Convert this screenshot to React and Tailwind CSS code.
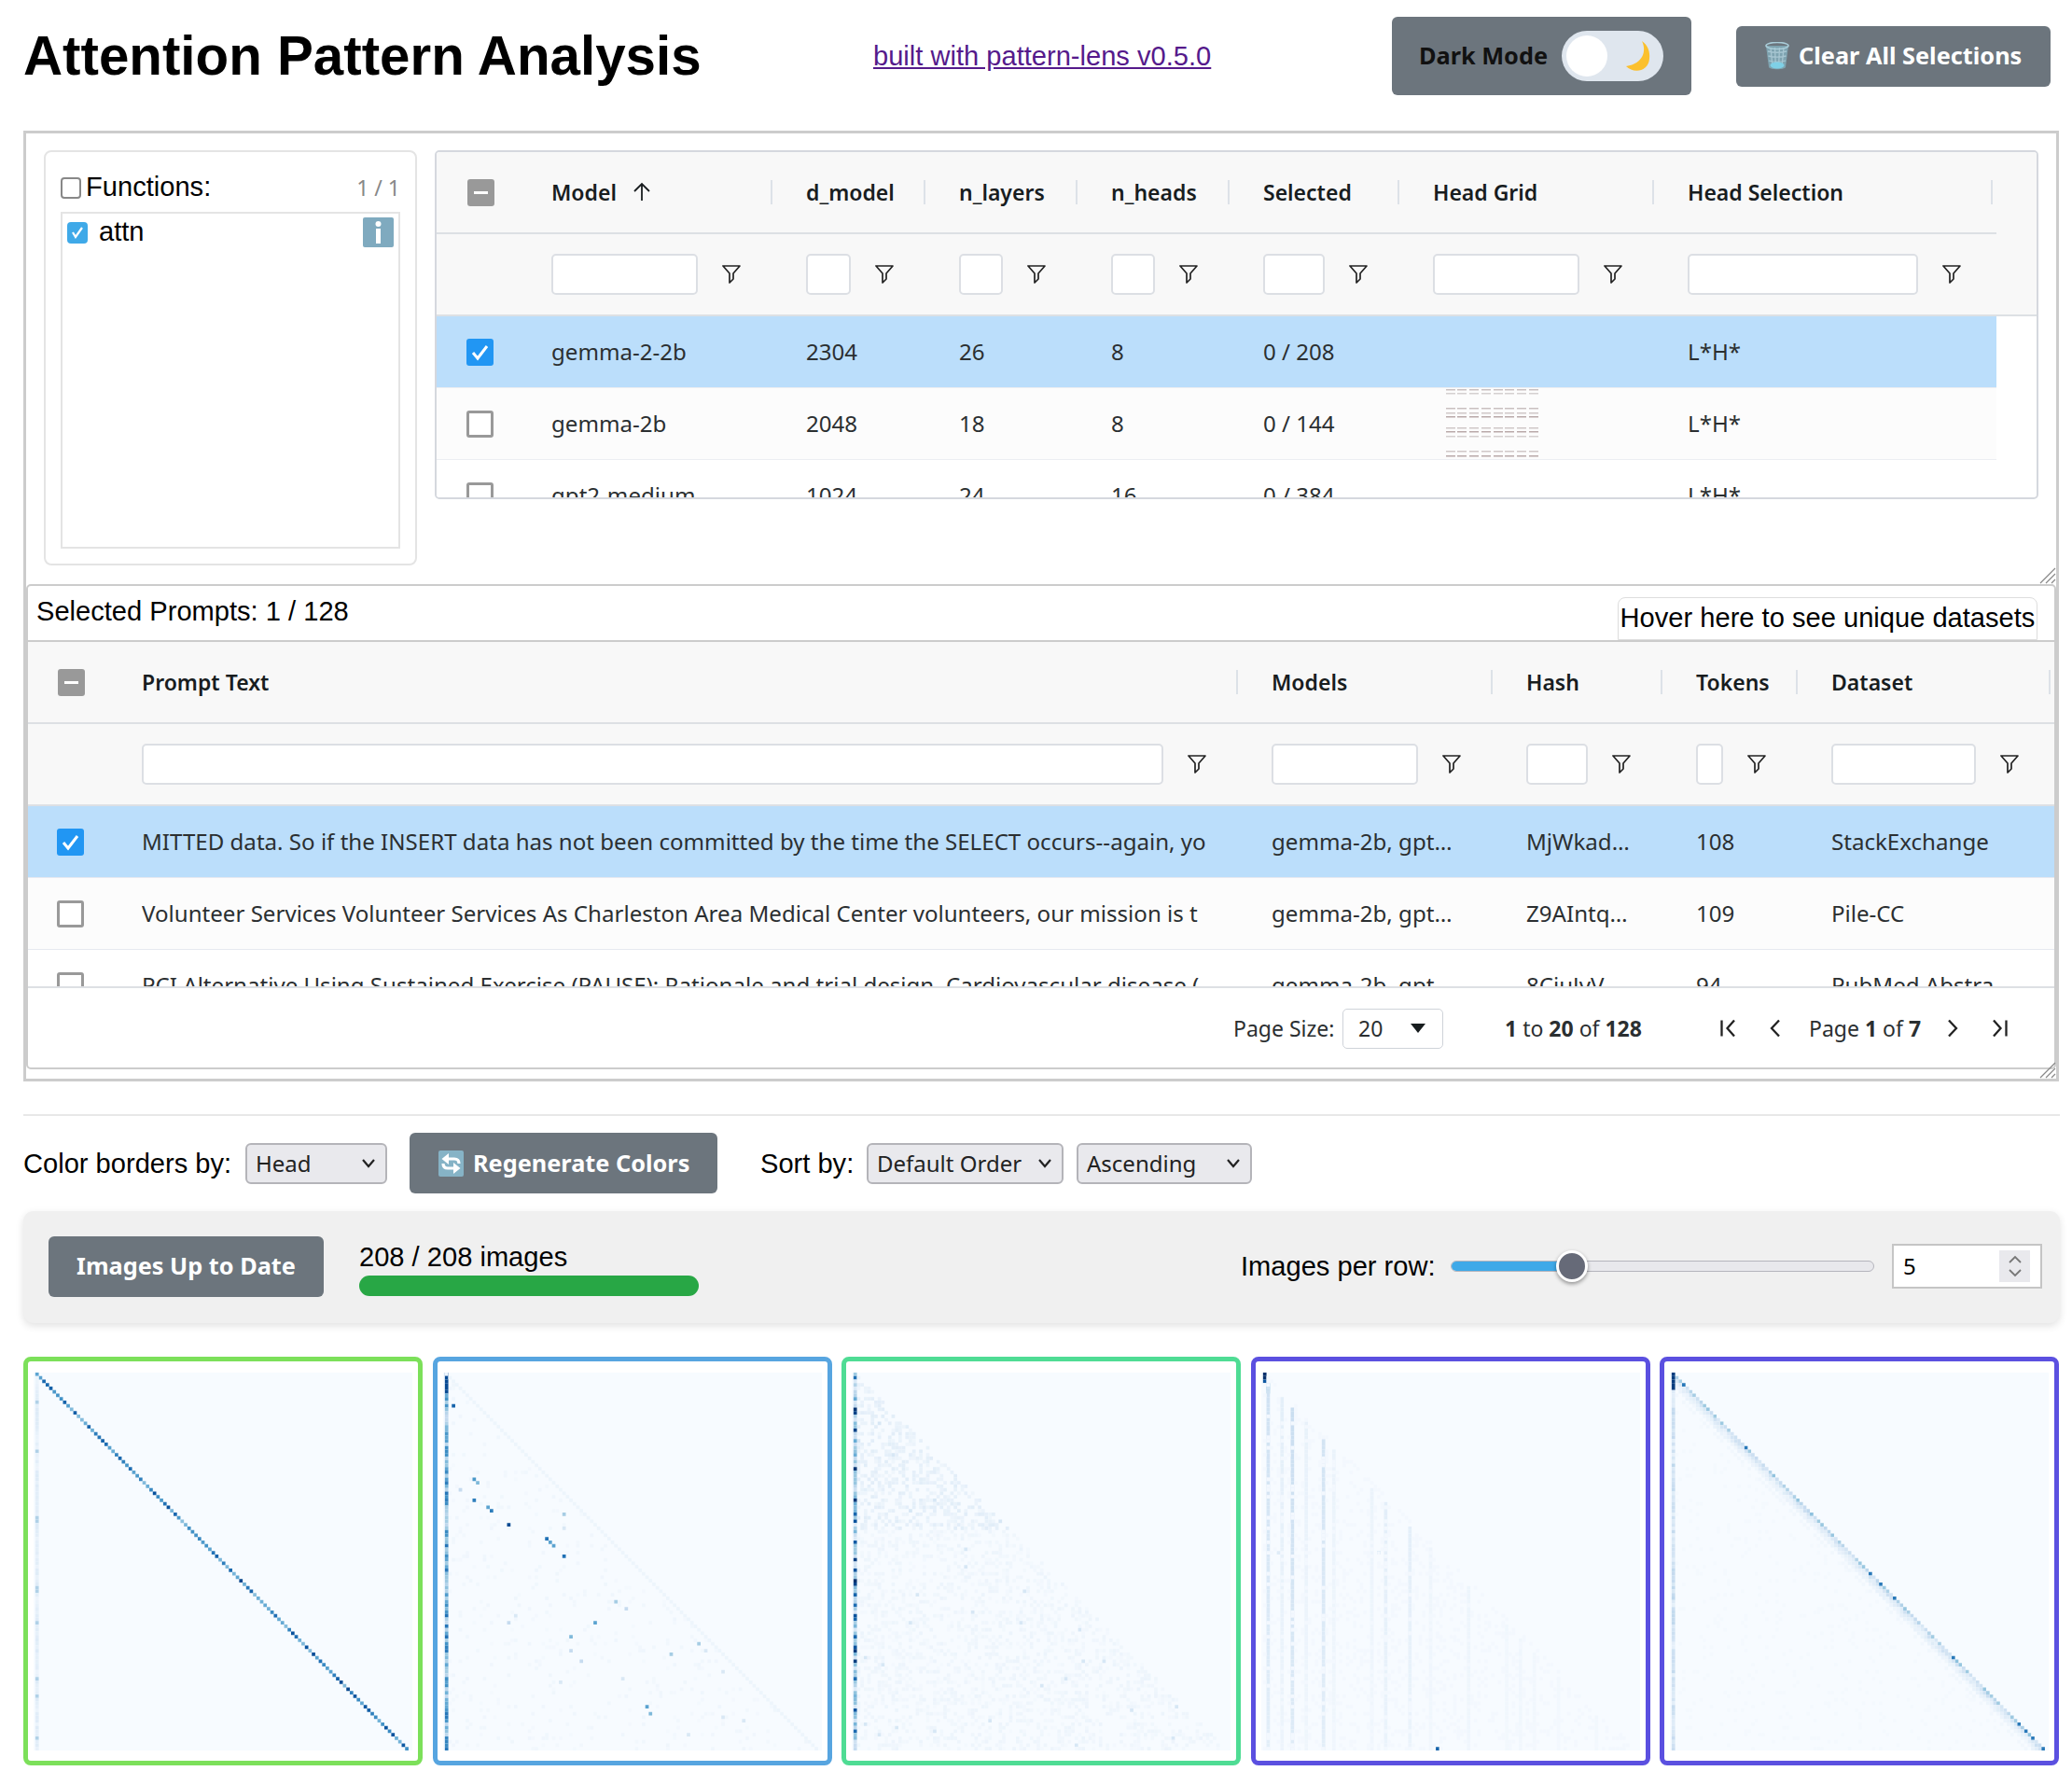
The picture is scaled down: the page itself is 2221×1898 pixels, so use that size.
import React from 'react';

const uiFont = "font-['Noto_Sans',sans-serif]";

const modelCols = 'grid-cols-[87px_273px_164px_163px_163px_182px_273px_363px]';
const promptCols = 'grid-cols-[86px_1211px_273px_182px_145px_271px]';

const modelHeaders = ['Model', 'd_model', 'n_layers', 'n_heads', 'Selected', 'Head Grid', 'Head Selection'];
const promptHeaders = ['Prompt Text', 'Models', 'Hash', 'Tokens', 'Dataset'];

const models = [
  ['gemma-2-2b', '2304', '26', '8', '0 / 208', '', 'L*H*'],
  ['gemma-2b', '2048', '18', '8', '0 / 144', 'grid', 'L*H*'],
  ['gpt2-medium', '1024', '24', '16', '0 / 384', '', 'L*H*'],
];

const prompts = [
  ['MITTED data. So if the INSERT data has not been committed by the time the SELECT occurs--again, yo', 'gemma-2b, gpt…', 'MjWkad…', '108', 'StackExchange'],
  ['Volunteer Services Volunteer Services As Charleston Area Medical Center volunteers, our mission is t', 'gemma-2b, gpt…', 'Z9AIntq…', '109', 'Pile-CC'],
  ['PCI Alternative Using Sustained Exercise (PAUSE): Rationale and trial design. Cardiovascular disease (', 'gemma-2b, gpt…', '8CjuJvV…', '94', 'PubMed Abstra…'],
];

// matplotlib Blues
const BLUES = [[247, 251, 255], [222, 235, 247], [198, 219, 239], [158, 202, 225], [107, 174, 214], [66, 146, 198], [33, 113, 181], [8, 81, 156], [8, 48, 107]];
const blue = (t) => {
  const p = Math.min(7.999, Math.max(0, t * 8));
  const k = Math.floor(p);
  const f = p - k;
  const c = BLUES[k].map((v, i) => Math.round(v + (BLUES[k + 1][i] - v) * f));
  return `rgb(${c[0]},${c[1]},${c[2]})`;
};

const makeRng = (seed) => () => {
  seed = (seed * 1664525 + 1013904223) % 4294967296;
  return seed / 4294967296;
};

const N = 108;

function heatOne() {
  const r = makeRng(11);
  const cells = [];
  for (let i = 0; i < N; i++) {
    cells.push([i, i, 0.42 + r() * 0.5]);
    if (i > 0) cells.push([0, i, r() < 0.1 ? 0.32 : 0.05 + r() * 0.08]);
  }
  return cells;
}

const spotsTwo = [
  [8, 30, 0.6], [9, 31, 0.45], [2, 9, 0.8], [4, 33, 0.25], [8, 36, 0.7], [12, 38, 0.55], [13, 39, 0.7], [18, 43, 0.9],
  [29, 47, 0.75], [30, 48, 0.55], [31, 49, 0.55], [34, 52, 0.75], [34, 40, 0.35], [34, 44, 0.15], [43, 71, 0.55], [18, 71, 0.25],
  [20, 69, 0.15], [36, 75, 0.45], [36, 79, 0.25], [39, 82, 0.25], [65, 80, 0.35], [73, 77, 0.35], [80, 85, 0.15], [58, 95, 0.55],
  [59, 97, 0.45], [52, 67, 0.25], [49, 65, 0.35], [75, 79, 0.15], [51, 87, 0.15], [33, 88, 0.15], [80, 98, 0.15], [86, 99, 0.15], [70, 103, 0.15],
];

function heatTwo() {
  const r = makeRng(23);
  const cells = [];
  for (let i = 0; i < N; i++) {
    cells.push([0, i, i < 6 ? 0.9 : 0.25 + r() * 0.5]);
    cells.push([i, i, 0.05]);
    for (let j = i + 1; j < N; j++) {
      if (r() < 0.07) cells.push([i, j, 0.015 + r() * 0.025]);
    }
  }
  return cells.concat(spotsTwo);
}

function heatThree() {
  const r = makeRng(37);
  const cells = [];
  for (let i = 0; i < N; i++) {
    cells.push([0, i, r() < 0.22 ? 0.75 + r() * 0.25 : 0.12 + r() * 0.4]);
    for (let j = i; j < N; j++) {
      if (i === 0) continue;
      const p = j < 45 ? 0.45 : 0.35;
      if (r() < p) cells.push([i, j, r() < 0.012 ? 0.16 : j < 45 ? 0.04 + r() * 0.07 : 0.015 + r() * 0.04]);
    }
  }
  return cells;
}

function heatFour() {
  const r = makeRng(41);
  const cells = [[0, 0, 1], [0, 1, 1], [0, 2, 0.85], [1, 3, 0.45], [1, 4, 0.45], [1, 5, 0.35], [33, 51, 0.35], [50, 107, 0.8], [4, 51, 0.12]];
  const streaks = [[1, 0.2], [5, 0.1], [8, 0.24], [12, 0.08], [17, 0.2], [20, 0.07], [31, 0.07], [35, 0.12], [42, 0.12], [48, 0.06], [59, 0.07], [70, 0.05], [74, 0.06], [78, 0.05], [85, 0.04], [96, 0.05]];
  streaks.forEach(([col, s]) => {
    for (let j = col + 2; j < N; j++) cells.push([col, j, s * (1 - j / 220)]);
  });
  for (let i = 0; i < N; i++) {
    for (let j = i; j < N; j++) {
      if (r() < 0.2) cells.push([i, j, 0.02]);
    }
  }
  return cells;
}

function heatFive() {
  const r = makeRng(53);
  const cells = [];
  for (let i = 0; i < N; i++) {
    const hit = r();
    cells.push([i, i, hit < 0.08 ? 0.72 : 0.14 + r() * 0.28]);
    if (i > 1) cells.push([i - 1, i, 0.08 + r() * 0.14]);
    if (i > 2) cells.push([i - 2, i, 0.05 + r() * 0.07]);
    if (i > 3) cells.push([i - 3, i, 0.03 + r() * 0.04]);
    if (i > 5 && r() < 0.6) cells.push([i - 5, i, 0.03]);
    cells.push([0, i, i < 5 ? 0.95 : 0.08 + r() * 0.2]);
    for (let j = i + 3; j < N; j++) {
      if (i > 0 && r() < 0.08) cells.push([i, j, 0.015]);
    }
  }
  return cells;
}

const heatmaps = [
  { color: 'border-[#7ce05a]', cells: heatOne() },
  { color: 'border-[#57a5e0]', cells: heatTwo() },
  { color: 'border-[#4fdc94]', cells: heatThree() },
  { color: 'border-[#5b50e0]', cells: heatFour() },
  { color: 'border-[#5b50e0]', cells: heatFive() },
];

const Heatmap = ({ color, cells }) => (
  <div className={`border-[5px] rounded-lg px-[6px] pt-[12px] pb-[11px] bg-white ${color}`}>
    <svg viewBox="-0.5 0 109.6 108" preserveAspectRatio="none" className="block w-full h-[405px]">
      <rect x="-0.5" width="109.6" height={N} fill="#f7fbff" />
      {cells.map(([x, y, t], i) => (
        <rect key={i} x={x} y={y} width="1" height="1" fill={blue(t)} />
      ))}
    </svg>
  </div>
);

const Check = ({ state }) => {
  if (state === 'on') {
    return (
      <div className="w-[29px] h-[29px] rounded-[3px] bg-[#2196f3] flex items-center justify-center">
        <svg width="21" height="21" viewBox="0 0 21 21" fill="none" stroke="white" strokeWidth="3"><path d="M3 11l5 6L18 4" /></svg>
      </div>
    );
  }
  if (state === 'mixed') {
    return (
      <div className="w-[29px] h-[29px] rounded-[3px] bg-[#999] flex items-center justify-center">
        <div className="w-[15px] h-[3px] bg-white" />
      </div>
    );
  }
  return <div className="w-[29px] h-[29px] rounded-[3px] border-[3px] border-[#999] bg-white" />;
};

const Funnel = () => (
  <svg width="20" height="20" viewBox="0 0 20 20" fill="none" stroke="#222" strokeWidth="1.7" className="shrink-0">
    <path d="M1 1h18l-7 8v6l-4 4V9z" strokeLinejoin="round" />
  </svg>
);

const ResizeHandle = () => (
  <svg width="18" height="18" viewBox="0 0 18 18" stroke="#888" strokeWidth="1.2" className="absolute right-0 bottom-0">
    <path d="M17 1L1 17M17 7L7 17M17 13L13 17" />
  </svg>
);

const HeadGrid = () => {
  const xs = [0, 12, 25, 38, 51, 63, 76, 89];
  const ys = [[1, '#c9c0c0'], [5, '#d5d0d0'], [21, '#c9c0c0'], [26, '#cfc8c8'], [30, '#b9a9a9'], [42, '#d0c8c8'], [46, '#b9a9a9'], [51, '#d5d0d0'], [67, '#d0c8c8'], [72, '#b9a9a9']];
  return (
    <svg width="100" height="76" viewBox="0 0 100 76" className="ml-[14px]">
      {ys.map(([y, c]) => xs.map((x) => <rect key={`${x}-${y}`} x={x} y={y} width="10" height="1.5" fill={c} />))}
    </svg>
  );
};

const HeaderCell = ({ label, sorted }) => (
  <div className="relative flex items-center pl-[36px] h-full">
    <span className="font-semibold text-[23px] text-[#181d1f] whitespace-nowrap">{label}</span>
    {sorted && (
      <svg width="22" height="22" viewBox="0 0 22 22" fill="none" stroke="#181d1f" strokeWidth="1.8" className="ml-[16px]">
        <path d="M11 20V2M3 10l8-8 8 8" />
      </svg>
    )}
    <div className="absolute right-0 top-1/2 -translate-y-1/2 w-[2px] h-[26px] bg-[#dde2e8]" />
  </div>
);

const FilterCell = () => (
  <div className="flex items-center gap-[26px] pl-[36px] pr-[34px] h-full">
    <div className="flex-1 min-w-0 h-[44px] bg-white border-2 border-[#dcdfe4] rounded-[5px]" />
    <Funnel />
  </div>
);

const Cell = ({ children }) => (
  <div className="flex items-center pl-[36px] pr-[29px] h-full text-[24.1px] text-[#2b2f31] whitespace-nowrap overflow-hidden">
    <span className="block overflow-hidden">{children}</span>
  </div>
);

const ModelGrid = () => (
  <div className={`w-[1719px] h-[374px] border-2 border-[#d5d8de] rounded-[5px] overflow-hidden bg-white ${uiFont}`}>
    <div className="bg-[#f8f8f8] border-b-2 border-[#dde0e4]">
      <div className={`grid ${modelCols} w-[1672px] h-[88px] border-b-2 border-[#dde0e4]`}>
        <div className="flex items-center pl-[33px]"><Check state="mixed" /></div>
        {modelHeaders.map((h, i) => <HeaderCell key={h} label={h} sorted={i === 0} />)}
      </div>
      <div className={`grid ${modelCols} w-[1672px] h-[86px]`}>
        <div />
        {modelHeaders.map((h) => <FilterCell key={h} />)}
      </div>
    </div>
    {models.map((row, i) => (
      <div key={row[0]} className={`grid ${modelCols} w-[1672px] h-[77px] border-b border-[#eceef2] ${i === 0 ? 'bg-[#bbdefb]' : i === 1 ? 'bg-[#fcfcfc]' : 'bg-white'}`}>
        <div className="flex items-center pl-[32px]"><Check state={i === 0 ? 'on' : 'off'} /></div>
        {row.map((c, k) => (c === 'grid' ? <div key={k} className="flex items-center pl-[36px]"><HeadGrid /></div> : <Cell key={k}>{c}</Cell>))}
      </div>
    ))}
  </div>
);

const PromptGrid = () => (
  <div className={uiFont}>
    <div className="bg-[#f8f8f8] border-b-2 border-[#dde0e4]">
      <div className={`grid ${promptCols} h-[88px] border-b-2 border-[#dde0e4]`}>
        <div className="flex items-center pl-[32px]"><Check state="mixed" /></div>
        {promptHeaders.map((h) => <HeaderCell key={h} label={h} />)}
      </div>
      <div className={`grid ${promptCols} h-[86px]`}>
        <div />
        {promptHeaders.map((h) => <FilterCell key={h} />)}
      </div>
    </div>
    <div className="h-[195px] overflow-hidden bg-white border-b-2 border-[#dde0e4]">
      {prompts.map((row, i) => (
        <div key={row[2]} className={`grid ${promptCols} h-[77px] border-b border-[#e6e9f0] ${i === 0 ? 'bg-[#bbdefb]' : i === 1 ? 'bg-[#fcfcfc]' : 'bg-white'}`}>
          <div className="flex items-center pl-[31px]"><Check state={i === 0 ? 'on' : 'off'} /></div>
          {row.map((c, k) => <Cell key={k}>{c}</Cell>)}
        </div>
      ))}
    </div>
    <Pagination />
  </div>
);

const PagerIcon = ({ d }) => (
  <svg width="22" height="22" viewBox="0 0 22 22" fill="none" stroke="#222" strokeWidth="2.3"><path d={d} /></svg>
);

const Pagination = () => (
  <div className="h-[86px] flex items-center text-[23px] text-[#2b2f31] pl-[1292px]">
    <span className="w-[117px] whitespace-nowrap">Page Size:</span>
    <div className="w-[108px] h-[43px] border border-[#cfd3d9] rounded-[5px] flex items-center justify-between pl-[16px] pr-[18px]">
      <span>20</span>
      <svg width="16" height="10" viewBox="0 0 16 10" fill="#181d1f"><path d="M0 0h16L8 10z" /></svg>
    </div>
    <span className="w-[147px] ml-[66px] whitespace-nowrap"><b>1</b> to <b>20</b> of <b>128</b></span>
    <div className="ml-[80px] w-[22px]"><PagerIcon d="M5.5 2.5v17M19 2.5L11.5 11l7.5 8.5" /></div>
    <div className="ml-[30px] w-[22px]"><PagerIcon d="M15 2.5L7 11l8 8.5" /></div>
    <span className="ml-[25px] w-[120px] whitespace-nowrap">Page <b>1</b> of <b>7</b></span>
    <div className="ml-[23px] w-[22px]"><PagerIcon d="M7 2.5l8 8.5-8 8.5" /></div>
    <div className="ml-[30px] w-[22px]"><PagerIcon d="M16.5 2.5v17M3 2.5L10.5 11 3 19.5" /></div>
  </div>
);

const Select = ({ label, className }) => (
  <div className={`h-[44px] bg-[#e9e9ed] border-2 border-[#b4b4b9] rounded-[6px] flex items-center justify-between pl-[9px] pr-[10px] text-[24px] text-[#222] ${uiFont} ${className}`}>
    <span>{label}</span>
    <svg width="16" height="10" viewBox="0 0 16 10" fill="none" stroke="#222" strokeWidth="2.2"><path d="M2 1l6 7 6-7" /></svg>
  </div>
);

const TrashEmoji = () => (
  <svg width="26" height="30" viewBox="0 0 26 30" className="shrink-0">
    <path d="M1 4l3 23c1 3 17 3 18 0l3-23z" fill="#7ea3b0" />
    <path d="M6 6l2 21M10.500 6l1 22M15.500 6l-1 22M20 6l-2 21M3 10c6 1.500 14 1.500 20 0M3.500 15c6 1.500 13 1.500 19 0M4 20c5 1.500 13 1.500 18 0" stroke="#a7c6d1" strokeWidth="1.3" fill="none" />
    <ellipse cx="13" cy="4" rx="12" ry="3.500" fill="none" stroke="#a9ccd8" strokeWidth="1.600" />
    <ellipse cx="13" cy="25" rx="7.500" ry="3.500" fill="#7fd0e6" />
  </svg>
);

const RefreshEmoji = () => (
  <svg width="27" height="28" viewBox="0 0 27 28" className="shrink-0">
    <rect width="27" height="28" rx="2" fill="#86b3c6" />
    <path d="M22 14c0-3-1.500-5-5-5H10" stroke="white" strokeWidth="3.200" fill="none" />
    <path d="M11 3v12L3.500 9z" fill="white" />
    <path d="M5 14c0 3 1.500 5 5 5h7" stroke="white" strokeWidth="3.200" fill="none" />
    <path d="M16 13v12l7.500-6z" fill="white" />
  </svg>
);

const InfoEmoji = () => (
  <svg width="33" height="32" viewBox="0 0 33 32">
    <rect width="33" height="32" rx="2" fill="#7faabf" />
    <circle cx="16.5" cy="7" r="3" fill="white" />
    <rect x="14" y="12" width="5" height="16" fill="white" />
  </svg>
);

const Moon = () => (
  <svg width="28" height="36" viewBox="0 0 28 36">
    <path d="M19 1c5 10 2 24-17 27 8 8 24 6 25-8C28 12 25 5 19 1z" fill="#fbc02d" />
  </svg>
);

const FunctionPanel = () => (
  <div className="w-[400px] h-[445px] shrink-0 border-2 border-[#e4e4e4] rounded-[8px] px-[16px] pt-[18px] pb-[16px] flex flex-col">
    <div className="flex items-center h-[46px] pb-[6px] text-[29.1px] text-black">
      <div className="w-[22px] h-[23px] bg-white border-2 border-[#888] rounded-[4px] mr-[5px]" />
      <span>Functions:</span>
      <span className={`ml-auto text-[23px] text-[#888] ${uiFont}`}>1 / 1</span>
    </div>
    <div className="flex-1 border-2 border-[#e4e4e4] px-[5px] pt-[3px]">
      <div className="flex items-center text-[29.1px] h-[34px]">
        <div className="w-[22px] h-[23px] rounded-[4px] bg-[#3fa9e8] flex items-center justify-center">
          <svg width="14" height="14" viewBox="0 0 14 14" fill="none" stroke="white" strokeWidth="2.2"><path d="M2 7l3 5 7-10" /></svg>
        </div>
        <span className="ml-[12px]">attn</span>
        <span className="ml-auto"><InfoEmoji /></span>
      </div>
    </div>
  </div>
);

export default function App() {
  return (
    <div className="w-[2221px] h-[1898px] overflow-hidden pl-[25px] pr-[13px] bg-white font-['Liberation_Sans',sans-serif] text-black">
      {/* title row */}
      <div className="flex items-center h-[120px] mb-[20px]">
        <h1 className="w-[911px] shrink-0 text-[58.3px] leading-none font-bold whitespace-nowrap">Attention Pattern Analysis</h1>
        <a href="#" className="w-[556px] shrink-0 pt-[2px] text-[29.1px] text-[#551a8b] underline whitespace-nowrap">built with pattern-lens v0.5.0</a>
        <div className={`w-[321px] h-[84px] shrink-0 bg-[#6c757d] rounded-[6px] flex items-center pl-[29px] ${uiFont}`}>
          <span className="w-[153px] text-[25.3px] font-bold text-[#111] whitespace-nowrap">Dark Mode</span>
          <div className="relative w-[109px] h-[54px] rounded-full bg-[#dfe6ee]">
            <div className="absolute left-[5px] top-[5px] w-[44px] h-[44px] rounded-full bg-white" />
            <div className="absolute right-[14px] top-[10px]"><Moon /></div>
          </div>
        </div>
        <div className={`ml-[48px] w-[337px] h-[65px] shrink-0 bg-[#6c757d] rounded-[6px] flex items-center pl-[31px] gap-[10px] text-[25.3px] font-bold text-white whitespace-nowrap ${uiFont}`}>
          <TrashEmoji />
          Clear All Selections
        </div>
      </div>

      {/* selection box */}
      <div className="relative w-[2182px] h-[1019px] border-[3px] border-[#ccc] flex flex-col">
        <div className="relative h-[483px] flex gap-[19px] pl-[19px] pt-[18px]">
          <FunctionPanel />
          <ModelGrid />
          <ResizeHandle />
        </div>
        <div className="relative h-[520px] border-2 border-[#ccc] rounded-[5px] bg-white">
          <div className="h-[58px] flex items-center justify-between pl-[9px] text-[29.1px]">
            <span className="pb-[2px]">Selected Prompts: 1 / 128</span>
            <div className="self-end w-[450px] h-[46px] border border-[#ddd] rounded-t-[8px] flex items-center justify-center mr-[18px] whitespace-nowrap">Hover here to see unique datasets</div>
          </div>
          <div className="border-t-2 border-[#ccc]"><PromptGrid /></div>
        </div>
        <ResizeHandle />
      </div>

      <div className="mt-[35px] h-[2px] bg-[#e8e8e8]" />

      {/* color and sort controls */}
      <div className="flex items-center h-[65px] mt-[18px] text-[29.1px]">
        <span className="w-[238px] pt-[2px] whitespace-nowrap">Color borders by:</span>
        <Select label="Head" className="w-[152px]" />
        <div className={`ml-[24px] w-[330px] h-[65px] bg-[#6c757d] rounded-[6px] flex items-center pl-[31px] gap-[10px] text-[25.3px] font-bold text-white whitespace-nowrap ${uiFont}`}>
          <RefreshEmoji />
          Regenerate Colors
        </div>
        <span className="ml-[46px] w-[114px] pt-[2px] whitespace-nowrap">Sort by:</span>
        <Select label="Default Order" className="w-[211px]" />
        <Select label="Ascending" className="ml-[14px] w-[188px]" />
      </div>

      {/* status bar */}
      <div className="mt-[19px] h-[120px] bg-[#f0f0f0] rounded-[11px] shadow-[0_3px_8px_rgba(0,0,0,0.12)] flex items-center pl-[27px] pr-[17px] pb-[2px] text-[29.1px]">
        <div className={`w-[295px] h-[65px] bg-[#6c757d] rounded-[6px] flex items-center justify-center text-[25.3px] font-bold text-white whitespace-nowrap ${uiFont}`}>Images Up to Date</div>
        <div className="ml-[38px] w-[364px] mt-[4px]">
          <div className="leading-[34px] h-[34px] mb-[3px] whitespace-nowrap">208 / 208 images</div>
          <div className="h-[22px] rounded-full bg-[#28a745]" />
        </div>
        <span className="ml-[581px] w-[225px] mt-[2px] whitespace-nowrap">Images per row:</span>
        <div className="relative w-[454px] h-[12px] rounded-full bg-[#e8e8ec] border border-[#b5b5bd]">
          <div className="w-[130px] h-full rounded-l-full bg-[#3fa9e8]" />
          <div className="absolute left-[112px] top-[-12px] w-[34px] h-[34px] rounded-full bg-[#666a78] border-[3px] border-white shadow-[0_2px_4px_rgba(0,0,0,0.4)]" />
        </div>
        <div className={`ml-[19px] w-[161px] h-[48px] bg-white border-2 border-[#c5c5c5] flex items-center justify-between pl-[10px] pr-[11px] text-[24px] ${uiFont}`}>
          <span>5</span>
          <div className="w-[33px] h-[34px] bg-[#e9e9ed] flex items-center justify-center">
            <svg width="18" height="28" viewBox="0 0 18 28" fill="none" stroke="#777" strokeWidth="1.8"><path d="M3 10l6-6 6 6M3 18l6 6 6-6" /></svg>
          </div>
        </div>
      </div>

      {/* heatmaps */}
      <div className="mt-[36px] mr-[1px] grid grid-cols-5 gap-[10.5px]">
        {heatmaps.map((h, i) => <Heatmap key={i} color={h.color} cells={h.cells} />)}
      </div>
    </div>
  );
}
